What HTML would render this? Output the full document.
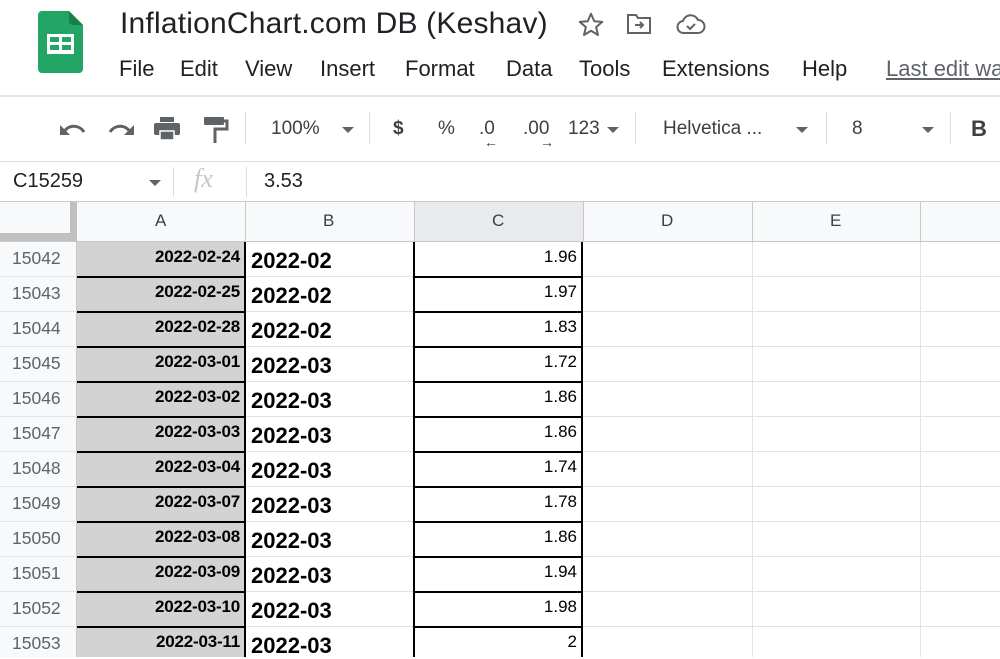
<!DOCTYPE html>
<html><head><meta charset="utf-8"><style>
*{margin:0;padding:0;box-sizing:border-box}
body{width:1000px;height:657px;overflow:hidden;background:#fff;font-family:"Liberation Sans",Arial,sans-serif;position:relative;color:#202124}
.a{position:absolute;white-space:nowrap}
.menu{top:56px;font-size:22px;color:#202124}
.tb{top:118px;font-size:19px;color:#3c4043}
.sep{position:absolute;width:1px;background:#dadce0}
.hl{position:absolute;height:1px;background:#e2e3e3}
.vl{position:absolute;width:1px;background:#e2e3e3}
.bk{position:absolute;background:#000}
.rh{position:absolute;left:0;width:77px;font-size:17.5px;color:#5f6368;padding-left:12px}
.ca{position:absolute;left:77px;width:163px;text-align:right;font-size:17px;font-weight:bold;color:#000;letter-spacing:-0.2px}
.cb{position:absolute;left:251px;font-size:22px;font-weight:bold;color:#000}
.cc{position:absolute;left:414px;width:163px;text-align:right;font-size:17px;color:#000}
.tri{position:absolute;width:0;height:0;border-left:6px solid transparent;border-right:6px solid transparent;border-top:6px solid #5f6368}
</style></head><body>
<svg class="a" style="left:38px;top:11px" width="45" height="62" viewBox="0 0 45 62">
<path d="M4 0H31L45 14V58a4 4 0 0 1-4 4H4a4 4 0 0 1-4-4V4a4 4 0 0 1 4-4z" fill="#23a566"/>
<path d="M31 0L45 14H35a4 4 0 0 1-4-4z" fill="#1a7f45"/>
<rect x="9" y="23" width="27" height="20" fill="#fff"/>
<rect x="12" y="26" width="9" height="5" fill="#23a566"/><rect x="24" y="26" width="9" height="5" fill="#23a566"/>
<rect x="12" y="34" width="9" height="5" fill="#23a566"/><rect x="24" y="34" width="9" height="5" fill="#23a566"/>
</svg>
<div class="a" style="left:120px;top:7px;font-size:30px;letter-spacing:0.2px;color:#202124">InflationChart.com DB (Keshav)</div>
<svg class="a" style="left:576px;top:10px" width="30" height="30" viewBox="0 0 24 24"><path d="M12 3l2.6 6 6.4.5-4.9 4.2 1.5 6.3L12 16.6 6.4 20l1.5-6.3L3 9.5l6.4-.5z" fill="none" stroke="#5f6368" stroke-width="1.6" stroke-linejoin="round"/></svg>
<svg class="a" style="left:626px;top:13px" width="26" height="22" viewBox="0 0 26 22"><path d="M2 2h8l2 3h12v15H2z" fill="none" stroke="#5f6368" stroke-width="2"/><path d="M9 12h8M14 9l3 3-3 3" fill="none" stroke="#5f6368" stroke-width="2"/></svg>
<svg class="a" style="left:676px;top:13px" width="30" height="22" viewBox="0 0 30 22"><path d="M8 20a6 6 0 0 1-1-12 8 8 0 0 1 15-1 6.5 6.5 0 0 1 0 13z" fill="none" stroke="#5f6368" stroke-width="2"/><path d="M11 13l3 3 5-5" fill="none" stroke="#5f6368" stroke-width="2"/></svg>
<div class="a menu" style="left:119px">File</div>
<div class="a menu" style="left:180px">Edit</div>
<div class="a menu" style="left:245px">View</div>
<div class="a menu" style="left:320px">Insert</div>
<div class="a menu" style="left:405px">Format</div>
<div class="a menu" style="left:506px">Data</div>
<div class="a menu" style="left:579px">Tools</div>
<div class="a menu" style="left:662px">Extensions</div>
<div class="a menu" style="left:802px">Help</div>
<div class="a menu" style="left:886px;color:#5f6368;text-decoration:underline">Last edit was</div>
<div class="a" style="left:0;top:95px;width:1000px;height:2px;background:#e6e6e6"></div>
<svg class="a" style="left:59px;top:118px" width="28" height="22" viewBox="0 0 28 22"><path d="M4 16C8 6 20 6 25 14" fill="none" stroke="#5f6368" stroke-width="3"/><path d="M1 7v10h10z" fill="#5f6368"/></svg>
<svg class="a" style="left:107px;top:118px" width="28" height="22" viewBox="0 0 28 22"><path d="M24 16C20 6 8 6 3 14" fill="none" stroke="#5f6368" stroke-width="3"/><path d="M27 7v10H17z" fill="#5f6368"/></svg>
<svg class="a" style="left:153px;top:116px" width="28" height="26" viewBox="0 0 28 26"><rect x="7" y="1" width="14" height="5" fill="#5f6368"/><rect x="1" y="7" width="26" height="12" rx="2" fill="#5f6368"/><rect x="7" y="15" width="14" height="9" fill="#5f6368" stroke="#fff" stroke-width="1.5"/></svg>
<svg class="a" style="left:203px;top:116px" width="26" height="28" viewBox="0 0 26 28"><rect x="1" y="1" width="20" height="8" rx="1" fill="#5f6368"/><path d="M21 5h3v8H12v14" fill="none" stroke="#5f6368" stroke-width="3"/></svg>
<div class="sep" style="left:245px;top:112px;height:32px"></div>
<div class="a tb" style="left:271px">100%</div>
<div class="tri" style="left:342px;top:127px"></div>
<div class="sep" style="left:369px;top:112px;height:32px"></div>
<div class="a tb" style="left:393px;font-weight:bold">$</div>
<div class="a tb" style="left:438px">%</div>
<div class="a tb" style="left:479px">.0</div>
<div class="a" style="left:484px;top:134px;font-size:14px;color:#3c4043">←</div>
<div class="a tb" style="left:523px">.00</div>
<div class="a" style="left:540px;top:134px;font-size:14px;color:#3c4043">→</div>
<div class="a tb" style="left:568px">123</div>
<div class="tri" style="left:607px;top:127px"></div>
<div class="sep" style="left:635px;top:112px;height:32px"></div>
<div class="a tb" style="left:663px">Helvetica ...</div>
<div class="tri" style="left:796px;top:127px"></div>
<div class="sep" style="left:826px;top:112px;height:32px"></div>
<div class="a tb" style="left:852px">8</div>
<div class="tri" style="left:922px;top:127px"></div>
<div class="sep" style="left:950px;top:112px;height:32px"></div>
<div class="a tb" style="left:971px;font-weight:bold;font-size:22px;top:116px">B</div>
<div class="a" style="left:0;top:161px;width:1000px;height:1px;background:#dadce0"></div>
<div class="a" style="left:13px;top:170px;font-size:20px;color:#202124">C15259</div>
<div class="tri" style="left:149px;top:180px"></div>
<div class="sep" style="left:173px;top:167px;height:30px"></div>
<div class="a" style="left:194px;top:164px;font-size:26px;font-style:italic;font-family:'Liberation Serif',serif;color:#c6c6c6">fx</div>
<div class="sep" style="left:246px;top:167px;height:30px"></div>
<div class="a" style="left:264px;top:170px;font-size:20px;color:#202124">3.53</div>
<div class="a" style="left:0;top:201px;width:1000px;height:1px;background:#c8c8c8"></div>
<div class="a" style="left:0;top:202px;width:1000px;height:40px;background:#f8f9fa"></div>
<div class="a" style="left:414px;top:202px;width:169px;height:40px;background:#e8eaed"></div>
<div class="a" style="left:70px;top:202px;width:7px;height:31px;background:#c0c0c0"></div>
<div class="a" style="left:0;top:233px;width:77px;height:9px;background:#c0c0c0"></div>
<div class="a" style="left:0;top:241px;width:1000px;height:1px;background:#c8c8c8"></div>
<div class="a" style="left:155px;top:211px;font-size:17px;color:#3c4043">A</div>
<div class="a" style="left:323px;top:211px;font-size:17px;color:#3c4043">B</div>
<div class="a" style="left:492px;top:211px;font-size:17px;color:#3c4043">C</div>
<div class="a" style="left:661px;top:211px;font-size:17px;color:#3c4043">D</div>
<div class="a" style="left:830px;top:211px;font-size:17px;color:#3c4043">E</div>
<div class="vl" style="left:245px;top:202px;height:40px;background:#c8c8c8"></div>
<div class="vl" style="left:414px;top:202px;height:40px;background:#c8c8c8"></div>
<div class="vl" style="left:583px;top:202px;height:40px;background:#c8c8c8"></div>
<div class="vl" style="left:752px;top:202px;height:40px;background:#c8c8c8"></div>
<div class="vl" style="left:920px;top:202px;height:40px;background:#c8c8c8"></div>
<div class="a" style="left:0;top:242px;width:77px;height:415px;background:#f8f9fa"></div>
<div class="a" style="left:77px;top:242px;width:168px;height:415px;background:#d3d3d3"></div>
<div class="vl" style="left:76px;top:242px;height:415px;background:#c8c8c8"></div>
<div class="vl" style="left:752px;top:242px;height:415px"></div>
<div class="vl" style="left:920px;top:242px;height:415px"></div>
<div class="hl" style="left:0;top:276px;width:1000px"></div>
<div class="hl" style="left:0;top:311px;width:1000px"></div>
<div class="hl" style="left:0;top:346px;width:1000px"></div>
<div class="hl" style="left:0;top:381px;width:1000px"></div>
<div class="hl" style="left:0;top:416px;width:1000px"></div>
<div class="hl" style="left:0;top:451px;width:1000px"></div>
<div class="hl" style="left:0;top:486px;width:1000px"></div>
<div class="hl" style="left:0;top:521px;width:1000px"></div>
<div class="hl" style="left:0;top:556px;width:1000px"></div>
<div class="hl" style="left:0;top:591px;width:1000px"></div>
<div class="hl" style="left:0;top:626px;width:1000px"></div>
<div class="bk" style="left:77px;top:276px;width:168px;height:2px"></div><div class="bk" style="left:414px;top:276px;width:169px;height:2px"></div>
<div class="bk" style="left:77px;top:311px;width:168px;height:2px"></div><div class="bk" style="left:414px;top:311px;width:169px;height:2px"></div>
<div class="bk" style="left:77px;top:346px;width:168px;height:2px"></div><div class="bk" style="left:414px;top:346px;width:169px;height:2px"></div>
<div class="bk" style="left:77px;top:381px;width:168px;height:2px"></div><div class="bk" style="left:414px;top:381px;width:169px;height:2px"></div>
<div class="bk" style="left:77px;top:416px;width:168px;height:2px"></div><div class="bk" style="left:414px;top:416px;width:169px;height:2px"></div>
<div class="bk" style="left:77px;top:451px;width:168px;height:2px"></div><div class="bk" style="left:414px;top:451px;width:169px;height:2px"></div>
<div class="bk" style="left:77px;top:486px;width:168px;height:2px"></div><div class="bk" style="left:414px;top:486px;width:169px;height:2px"></div>
<div class="bk" style="left:77px;top:521px;width:168px;height:2px"></div><div class="bk" style="left:414px;top:521px;width:169px;height:2px"></div>
<div class="bk" style="left:77px;top:556px;width:168px;height:2px"></div><div class="bk" style="left:414px;top:556px;width:169px;height:2px"></div>
<div class="bk" style="left:77px;top:591px;width:168px;height:2px"></div><div class="bk" style="left:414px;top:591px;width:169px;height:2px"></div>
<div class="bk" style="left:77px;top:626px;width:168px;height:2px"></div><div class="bk" style="left:414px;top:626px;width:169px;height:2px"></div>
<div class="bk" style="left:244px;top:242px;width:2px;height:415px"></div>
<div class="bk" style="left:413px;top:242px;width:2px;height:415px"></div>
<div class="bk" style="left:581px;top:242px;width:2px;height:415px"></div>
<div class="rh" style="top:248px">15042</div><div class="ca" style="top:247px">2022-02-24</div><div class="cb" style="top:248px">2022-02</div><div class="cc" style="top:247px">1.96</div>
<div class="rh" style="top:283px">15043</div><div class="ca" style="top:282px">2022-02-25</div><div class="cb" style="top:283px">2022-02</div><div class="cc" style="top:282px">1.97</div>
<div class="rh" style="top:318px">15044</div><div class="ca" style="top:317px">2022-02-28</div><div class="cb" style="top:318px">2022-02</div><div class="cc" style="top:317px">1.83</div>
<div class="rh" style="top:353px">15045</div><div class="ca" style="top:352px">2022-03-01</div><div class="cb" style="top:353px">2022-03</div><div class="cc" style="top:352px">1.72</div>
<div class="rh" style="top:388px">15046</div><div class="ca" style="top:387px">2022-03-02</div><div class="cb" style="top:388px">2022-03</div><div class="cc" style="top:387px">1.86</div>
<div class="rh" style="top:423px">15047</div><div class="ca" style="top:422px">2022-03-03</div><div class="cb" style="top:423px">2022-03</div><div class="cc" style="top:422px">1.86</div>
<div class="rh" style="top:458px">15048</div><div class="ca" style="top:457px">2022-03-04</div><div class="cb" style="top:458px">2022-03</div><div class="cc" style="top:457px">1.74</div>
<div class="rh" style="top:493px">15049</div><div class="ca" style="top:492px">2022-03-07</div><div class="cb" style="top:493px">2022-03</div><div class="cc" style="top:492px">1.78</div>
<div class="rh" style="top:528px">15050</div><div class="ca" style="top:527px">2022-03-08</div><div class="cb" style="top:528px">2022-03</div><div class="cc" style="top:527px">1.86</div>
<div class="rh" style="top:563px">15051</div><div class="ca" style="top:562px">2022-03-09</div><div class="cb" style="top:563px">2022-03</div><div class="cc" style="top:562px">1.94</div>
<div class="rh" style="top:598px">15052</div><div class="ca" style="top:597px">2022-03-10</div><div class="cb" style="top:598px">2022-03</div><div class="cc" style="top:597px">1.98</div>
<div class="rh" style="top:633px">15053</div><div class="ca" style="top:632px">2022-03-11</div><div class="cb" style="top:633px">2022-03</div><div class="cc" style="top:632px">2</div>
</body></html>
